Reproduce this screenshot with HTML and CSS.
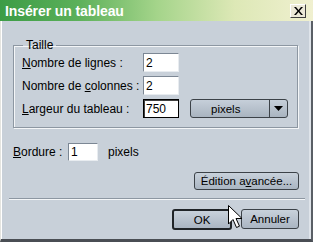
FILE: index.html
```html
<!doctype html>
<html lang="fr">
<head>
<meta charset="utf-8">
<title>Insérer un tableau</title>
<link rel="stylesheet" href="styles.css">
</head>
<body>
<div class="dlg-fenetre">
	<div class="dlg-titre">
		<span class="dlg-titre-texte">Insérer un tableau</span>
		<span class="dlg-fermer">
			<svg width="9" height="8" viewBox="0 0 9 8"><path d="M0 0h2l2.5 3 2.5-3h2l-3.5 4 3.5 4h-2l-2.5-3-2.5 3h-2l3.5-4z" fill="#000"/></svg>
		</span>
	</div>
	<div class="dlg-contenu">
		<fieldset class="dlg-groupe">
			<legend>Taille</legend>
			<div class="dlg-ligne">
				<label class="dlg-etiquette"><u>N</u>ombre de lignes :</label>
				<span class="dlg-champ">2</span>
			</div>
			<div class="dlg-ligne">
				<label class="dlg-etiquette">Nombre de <u>c</u>olonnes :</label>
				<span class="dlg-champ">2</span>
			</div>
			<div class="dlg-ligne">
				<label class="dlg-etiquette"><u>L</u>argeur du tableau :</label>
				<span class="dlg-champ dlg-champ-actif">750</span>
				<span class="dlg-liste">
					<span class="dlg-liste-valeur">pixels</span>
					<span class="dlg-liste-fleche">
						<svg width="9" height="5" viewBox="0 0 9 5"><path d="M0 0h9l-4.5 5z" fill="#000"/></svg>
					</span>
				</span>
			</div>
		</fieldset>
		<div class="dlg-bordure">
			<label class="dlg-etiquette-courte"><u>B</u>ordure :</label>
			<span class="dlg-champ dlg-champ-petit">1</span>
			<span class="dlg-unite">pixels</span>
		</div>
		<div class="dlg-avance">
			<button class="dlg-bouton dlg-bouton-large">Édition a<u>v</u>ancée...</button>
		</div>
		<div class="dlg-separateur"></div>
		<div class="dlg-actions">
			<button class="dlg-bouton dlg-bouton-defaut">OK</button>
			<button class="dlg-bouton dlg-bouton-annuler">Annuler</button>
		</div>
	</div>
	<svg class="dlg-curseur" width="14" height="24" viewBox="0 0 14 24">
		<path d="M0.5 0.5v18.5l4.5-4.5 3.5 8 3-1.3-3.5-7.7h6z" fill="#fff" stroke="#000" stroke-width="1"/>
	</svg>
</div>
</body>
</html>
```

FILE: styles.css
```css
*
{
	margin: 0;
	padding: 0;
	box-sizing: border-box;
}
body
{
	font-family: "Liberation Sans", Arial, sans-serif;
	font-size: 12px;
	color: #000;
	background-color: #c8d0d9;
}
.dlg-fenetre
{
	position: relative;
	width: 313px;
	height: 242px;
	background-color: #c8d0d9;
	border-left: 1px solid #e4e4e0;
	border-right: 2px solid #5a5f66;
	border-bottom: 3px solid #4a4e54;
	box-shadow: inset 1px 0 #fff, inset -2px 0 #dfe4ea;
}
.dlg-titre
{
	display: flex;
	align-items: center;
	justify-content: space-between;
	height: 21px;
	margin-left: -1px;
	margin-right: -2px;
	padding: 0 7px 0 5px;
	background: linear-gradient(90deg, #3c9c46 0%, #5cb05a 25%, #a4d48a 50%, #dde8b6 75%, #f0f0d0 100%);
}
.dlg-titre-texte
{
	color: #fff;
	font-weight: bold;
	font-size: 14px;
	letter-spacing: -0.1px;
}
.dlg-fermer
{
	display: flex;
	align-items: center;
	justify-content: center;
	width: 16px;
	height: 14px;
	background-color: #ece9d8;
	border: 1px solid;
	border-color: #fff #404040 #404040 #fff;
}
.dlg-contenu
{
	padding: 0 12px 0 11px;
}
.dlg-groupe
{
	margin: 17px 1px 0 1px;
	padding: 1px 8px 9px 8px;
	border: 1px solid #8d97a2;
	box-shadow: inset 1px 1px #f4f6f8, 1px 1px #f4f6f8;
}
.dlg-groupe legend
{
	margin-left: 1px;
	padding: 0 3px;
	line-height: 14px;
}
.dlg-ligne
{
	display: flex;
	align-items: center;
	height: 19px;
	margin-bottom: 4px;
}
.dlg-ligne:last-child
{
	margin-bottom: 0;
}
.dlg-etiquette
{
	width: 121px;
}
.dlg-champ
{
	display: flex;
	align-items: center;
	width: 36px;
	height: 19px;
	padding-left: 2px;
	background-color: #fff;
	border: 1px solid;
	border-color: #7c8794 #e8ecf0 #e8ecf0 #7c8794;
}
.dlg-champ-actif
{
	border: 1px solid #000;
	box-shadow: inset 1px 1px #404040;
}
.dlg-liste
{
	display: flex;
	margin-left: 11px;
	width: 98px;
	height: 19px;
	border: 1px solid #3c4248;
	border-radius: 3px;
	background: linear-gradient(#c6cfd9, #a9b4c0);
}
.dlg-liste-valeur
{
	flex: 1;
	display: flex;
	align-items: center;
	padding-left: 20px;
	font-size: 11.5px;
}
.dlg-liste-fleche
{
	display: flex;
	align-items: center;
	justify-content: center;
	width: 18px;
	border-left: 1px solid #3c4248;
}
.dlg-bordure
{
	display: flex;
	align-items: center;
	margin-top: 15px;
	height: 18px;
	padding-left: 1px;
}
.dlg-etiquette-courte
{
	width: 55px;
}
.dlg-champ-petit
{
	width: 30px;
	height: 18px;
}
.dlg-unite
{
	margin-left: 10px;
}
.dlg-avance
{
	display: flex;
	justify-content: flex-end;
	margin-top: 11px;
}
.dlg-bouton
{
	font-family: "Liberation Sans", Arial, sans-serif;
	font-size: 11.5px;
	color: #000;
	height: 18px;
	border: 1px solid #3c4248;
	border-radius: 3px;
	background: linear-gradient(#c8d1db, #aab5c2);
}
.dlg-bouton-large
{
	width: 105px;
}
.dlg-separateur
{
	margin: 8px -6px 0 -3px;
	height: 2px;
	border-top: 1px solid #8d97a2;
	border-bottom: 1px solid #f4f6f8;
}
.dlg-actions
{
	display: flex;
	justify-content: flex-end;
	align-items: flex-start;
	gap: 9px;
	margin-top: 9px;
}
.dlg-bouton-defaut
{
	width: 60px;
	height: 21px;
	border: 2px solid #202428;
}
.dlg-bouton-annuler
{
	width: 58px;
	height: 20px;
}
.dlg-curseur
{
	position: absolute;
	left: 227px;
	top: 205px;
}
```
